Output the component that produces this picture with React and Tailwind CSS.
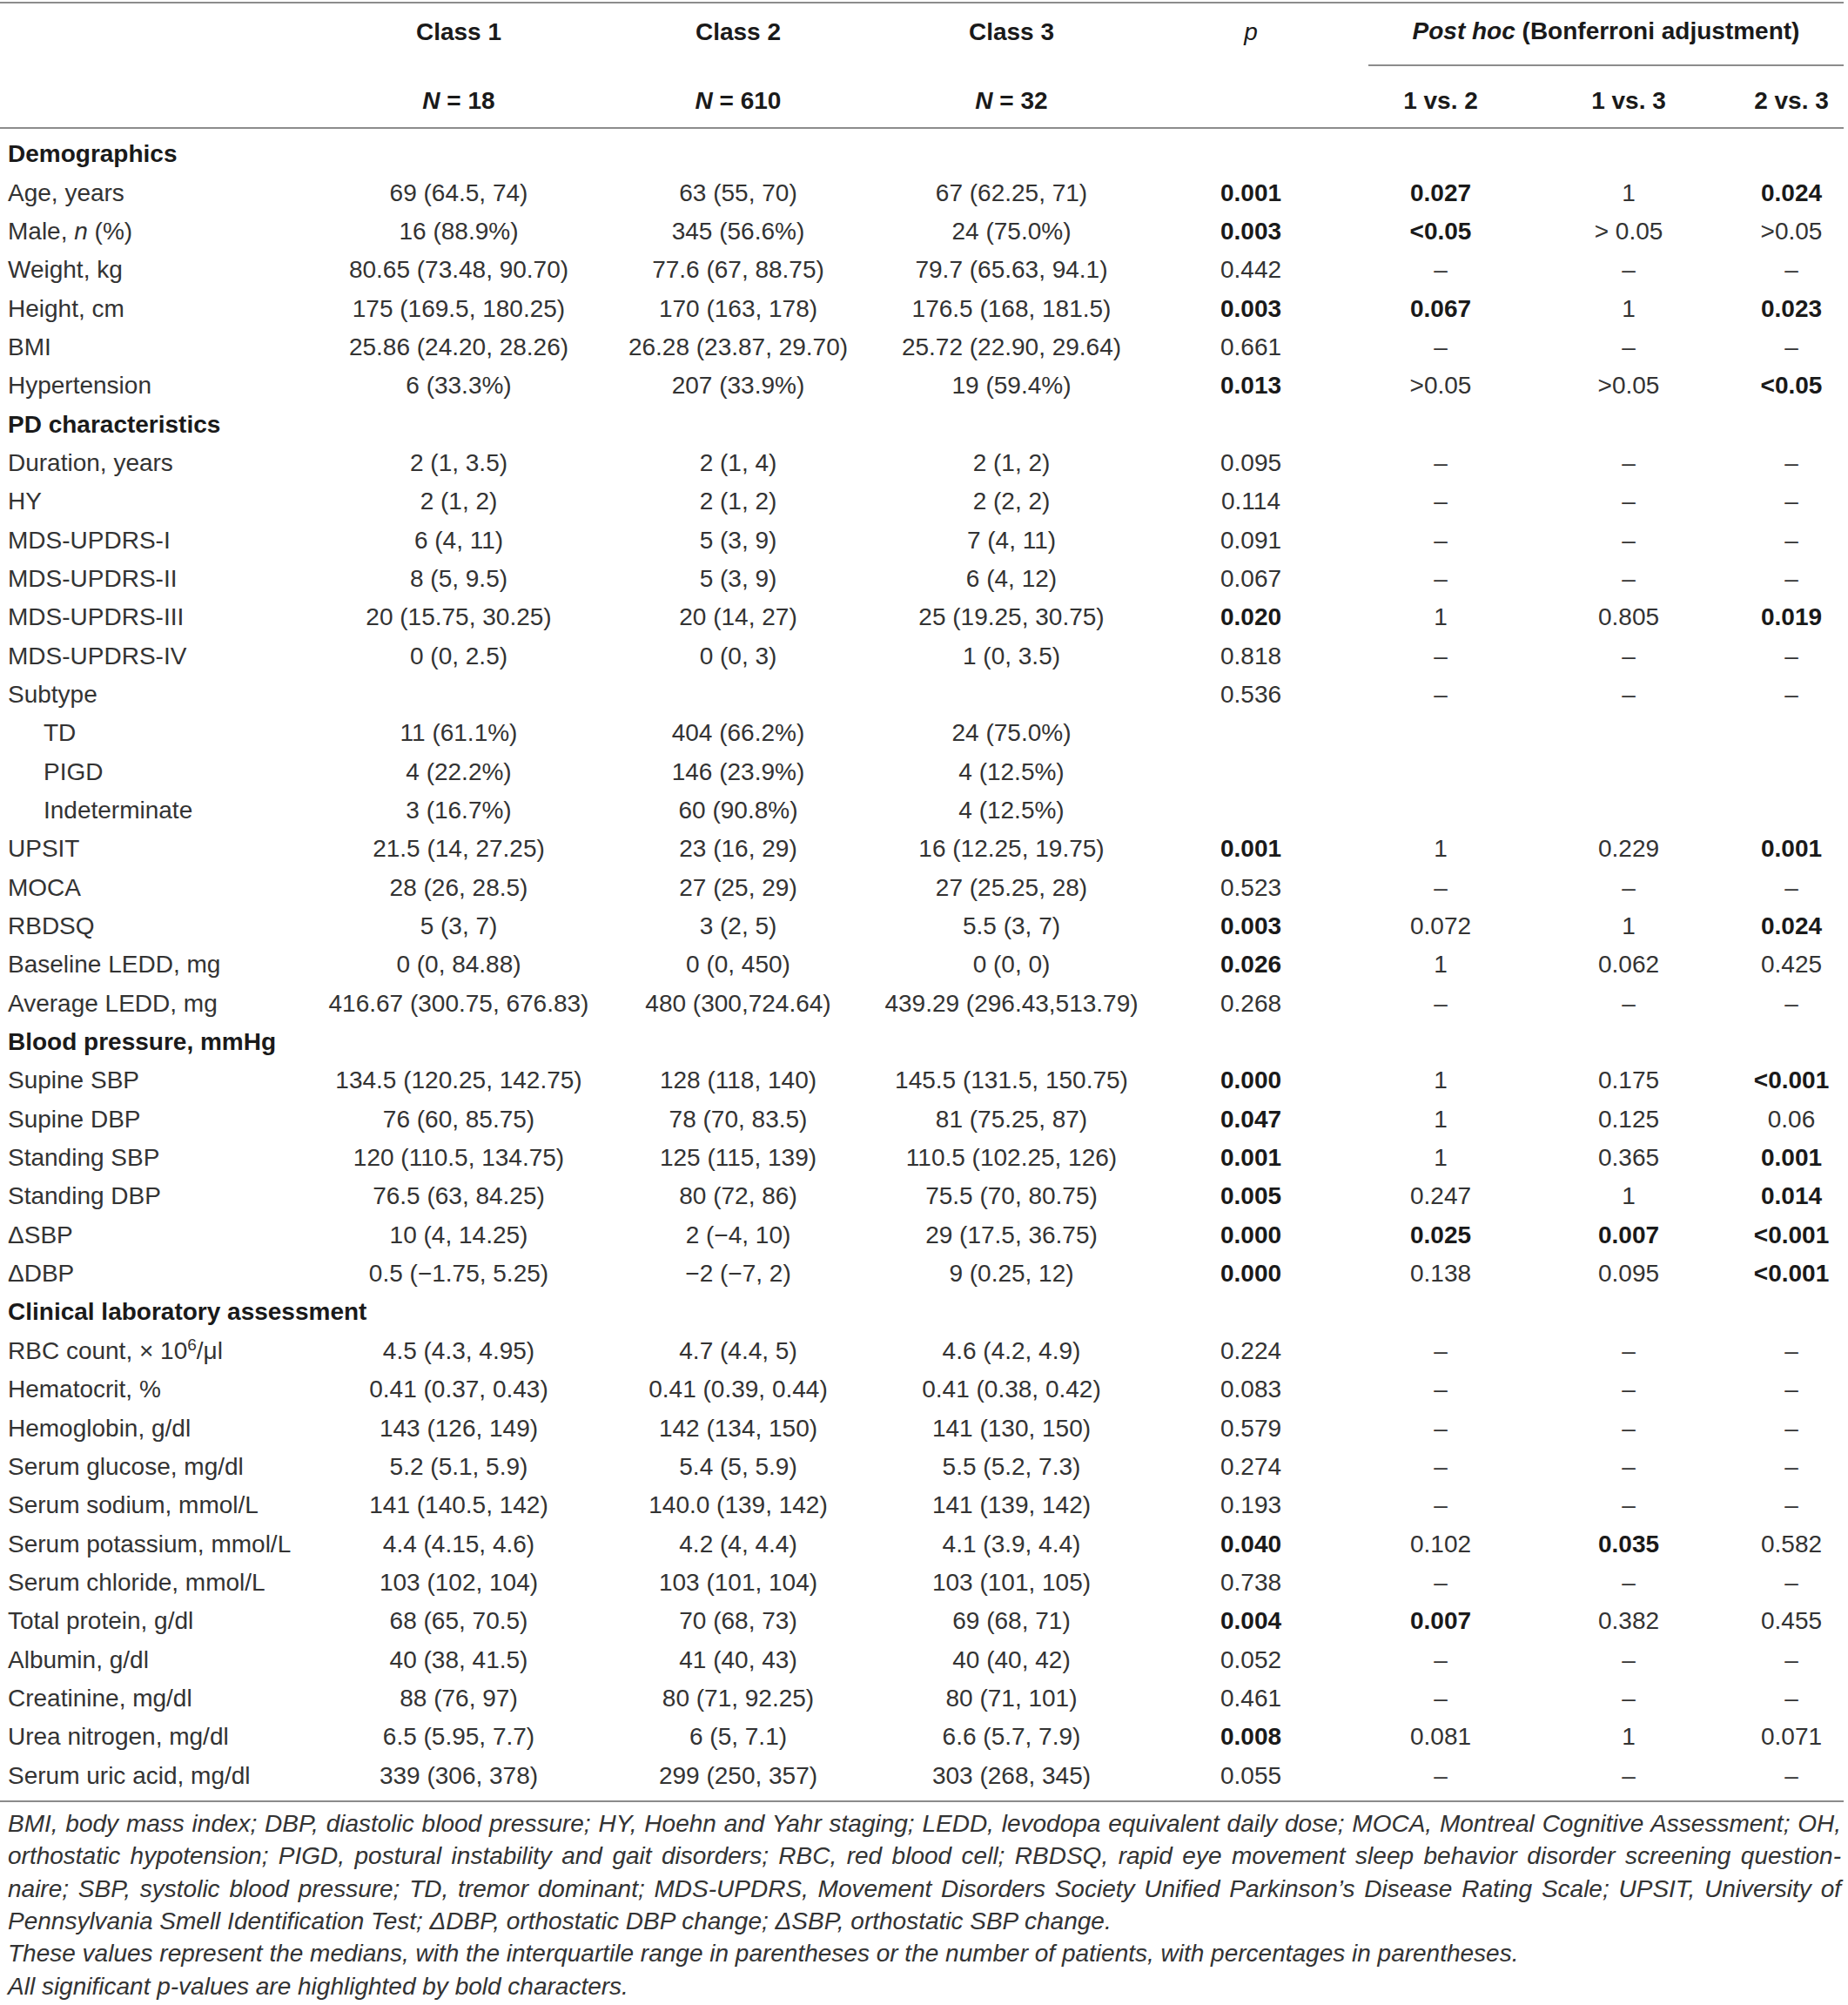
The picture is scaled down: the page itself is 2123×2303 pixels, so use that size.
import React from "react";

const COLS = "grid grid-cols-[360px_334px_308px_320px_230px_206px_226px_134px]";

// "*" at the start of a value means bold (significant)
const rows = [
  { section: "Demographics" },
  ["Age, years", "69 (64.5, 74)", "63 (55, 70)", "67 (62.25, 71)", "*0.001", "*0.027", "1", "*0.024"],
  [<>Male, <i>n</i> (%)</>, "16 (88.9%)", "345 (56.6%)", "24 (75.0%)", "*0.003", "*<0.05", "> 0.05", ">0.05"],
  ["Weight, kg", "80.65 (73.48, 90.70)", "77.6 (67, 88.75)", "79.7 (65.63, 94.1)", "0.442", "–", "–", "–"],
  ["Height, cm", "175 (169.5, 180.25)", "170 (163, 178)", "176.5 (168, 181.5)", "*0.003", "*0.067", "1", "*0.023"],
  ["BMI", "25.86 (24.20, 28.26)", "26.28 (23.87, 29.70)", "25.72 (22.90, 29.64)", "0.661", "–", "–", "–"],
  ["Hypertension", "6 (33.3%)", "207 (33.9%)", "19 (59.4%)", "*0.013", ">0.05", ">0.05", "*<0.05"],
  { section: "PD characteristics" },
  ["Duration, years", "2 (1, 3.5)", "2 (1, 4)", "2 (1, 2)", "0.095", "–", "–", "–"],
  ["HY", "2 (1, 2)", "2 (1, 2)", "2 (2, 2)", "0.114", "–", "–", "–"],
  ["MDS-UPDRS-I", "6 (4, 11)", "5 (3, 9)", "7 (4, 11)", "0.091", "–", "–", "–"],
  ["MDS-UPDRS-II", "8 (5, 9.5)", "5 (3, 9)", "6 (4, 12)", "0.067", "–", "–", "–"],
  ["MDS-UPDRS-III", "20 (15.75, 30.25)", "20 (14, 27)", "25 (19.25, 30.75)", "*0.020", "1", "0.805", "*0.019"],
  ["MDS-UPDRS-IV", "0 (0, 2.5)", "0 (0, 3)", "1 (0, 3.5)", "0.818", "–", "–", "–"],
  ["Subtype", "", "", "", "0.536", "–", "–", "–"],
  { sub: true, cells: ["TD", "11 (61.1%)", "404 (66.2%)", "24 (75.0%)", "", "", "", ""] },
  { sub: true, cells: ["PIGD", "4 (22.2%)", "146 (23.9%)", "4 (12.5%)", "", "", "", ""] },
  { sub: true, cells: ["Indeterminate", "3 (16.7%)", "60 (90.8%)", "4 (12.5%)", "", "", "", ""] },
  ["UPSIT", "21.5 (14, 27.25)", "23 (16, 29)", "16 (12.25, 19.75)", "*0.001", "1", "0.229", "*0.001"],
  ["MOCA", "28 (26, 28.5)", "27 (25, 29)", "27 (25.25, 28)", "0.523", "–", "–", "–"],
  ["RBDSQ", "5 (3, 7)", "3 (2, 5)", "5.5 (3, 7)", "*0.003", "0.072", "1", "*0.024"],
  ["Baseline LEDD, mg", "0 (0, 84.88)", "0 (0, 450)", "0 (0, 0)", "*0.026", "1", "0.062", "0.425"],
  ["Average LEDD, mg", "416.67 (300.75, 676.83)", "480 (300,724.64)", "439.29 (296.43,513.79)", "0.268", "–", "–", "–"],
  { section: "Blood pressure, mmHg" },
  ["Supine SBP", "134.5 (120.25, 142.75)", "128 (118, 140)", "145.5 (131.5, 150.75)", "*0.000", "1", "0.175", "*<0.001"],
  ["Supine DBP", "76 (60, 85.75)", "78 (70, 83.5)", "81 (75.25, 87)", "*0.047", "1", "0.125", "0.06"],
  ["Standing SBP", "120 (110.5, 134.75)", "125 (115, 139)", "110.5 (102.25, 126)", "*0.001", "1", "0.365", "*0.001"],
  ["Standing DBP", "76.5 (63, 84.25)", "80 (72, 86)", "75.5 (70, 80.75)", "*0.005", "0.247", "1", "*0.014"],
  ["ΔSBP", "10 (4, 14.25)", "2 (−4, 10)", "29 (17.5, 36.75)", "*0.000", "*0.025", "*0.007", "*<0.001"],
  ["ΔDBP", "0.5 (−1.75, 5.25)", "−2 (−7, 2)", "9 (0.25, 12)", "*0.000", "0.138", "0.095", "*<0.001"],
  { section: "Clinical laboratory assessment" },
  [<>RBC count, × 10<sup className="text-[19px]">6</sup>/μl</>, "4.5 (4.3, 4.95)", "4.7 (4.4, 5)", "4.6 (4.2, 4.9)", "0.224", "–", "–", "–"],
  ["Hematocrit, %", "0.41 (0.37, 0.43)", "0.41 (0.39, 0.44)", "0.41 (0.38, 0.42)", "0.083", "–", "–", "–"],
  ["Hemoglobin, g/dl", "143 (126, 149)", "142 (134, 150)", "141 (130, 150)", "0.579", "–", "–", "–"],
  ["Serum glucose, mg/dl", "5.2 (5.1, 5.9)", "5.4 (5, 5.9)", "5.5 (5.2, 7.3)", "0.274", "–", "–", "–"],
  ["Serum sodium, mmol/L", "141 (140.5, 142)", "140.0 (139, 142)", "141 (139, 142)", "0.193", "–", "–", "–"],
  ["Serum potassium, mmol/L", "4.4 (4.15, 4.6)", "4.2 (4, 4.4)", "4.1 (3.9, 4.4)", "*0.040", "0.102", "*0.035", "0.582"],
  ["Serum chloride, mmol/L", "103 (102, 104)", "103 (101, 104)", "103 (101, 105)", "0.738", "–", "–", "–"],
  ["Total protein, g/dl", "68 (65, 70.5)", "70 (68, 73)", "69 (68, 71)", "*0.004", "*0.007", "0.382", "0.455"],
  ["Albumin, g/dl", "40 (38, 41.5)", "41 (40, 43)", "40 (40, 42)", "0.052", "–", "–", "–"],
  ["Creatinine, mg/dl", "88 (76, 97)", "80 (71, 92.25)", "80 (71, 101)", "0.461", "–", "–", "–"],
  ["Urea nitrogen, mg/dl", "6.5 (5.95, 7.7)", "6 (5, 7.1)", "6.6 (5.7, 7.9)", "*0.008", "0.081", "1", "0.071"],
  ["Serum uric acid, mg/dl", "339 (306, 378)", "299 (250, 357)", "303 (268, 345)", "0.055", "–", "–", "–"],
];

const Value = ({ v }) => {
  if (typeof v === "string" && v.startsWith("*")) {
    return <span className="font-bold text-[#1a1a1a]">{v.slice(1)}</span>;
  }
  return <span>{v}</span>;
};

const Row = ({ cells, sub }) => (
  <div className={`${COLS} h-[44.35px] items-center`}>
    <div className={sub ? "pl-[50px]" : "pl-[9px]"}>{cells[0]}</div>
    {cells.slice(1).map((c, i) => (
      <div key={i} className={i === 6 ? "text-center pl-[14px]" : "text-center"}>
        <Value v={c} />
      </div>
    ))}
  </div>
);

export default function App() {
  return (
    <div className="bg-white min-h-screen pt-[2px]">
      <div className="w-[2118px] font-['Liberation_Sans',Arial,sans-serif] text-[28px] text-[#333]">
        {/* header */}
        <div className="border-t-2 border-[#8c8c8c]">
          <div className={`${COLS} h-[72px] font-bold text-[#1a1a1a]`}>
            <div />
            <div className="flex items-center justify-center pb-[6px]">Class 1</div>
            <div className="flex items-center justify-center pb-[6px]">Class 2</div>
            <div className="flex items-center justify-center pb-[6px]">Class 3</div>
            <div className="flex items-center justify-center pb-[6px] italic font-normal">p</div>
            <div className="col-span-3 ml-[20px] border-b-2 border-[#8c8c8c] flex items-center justify-center pb-[6px]">
              <span>
                <i>Post hoc</i> (Bonferroni adjustment)
              </span>
            </div>
          </div>
          <div className={`${COLS} h-[72px] items-center pt-[10px] font-bold text-[#1a1a1a] border-b-2 border-[#8c8c8c]`}>
            <div />
            <div className="text-center"><i>N</i> = 18</div>
            <div className="text-center"><i>N</i> = 610</div>
            <div className="text-center"><i>N</i> = 32</div>
            <div />
            <div className="text-center">1 vs. 2</div>
            <div className="text-center">1 vs. 3</div>
            <div className="text-center pl-[14px]">2 vs. 3</div>
          </div>
        </div>

        {/* body */}
        <div className="pt-[7px] pb-[6px] border-b-2 border-[#8c8c8c]">
          {rows.map((r, i) => {
            if (r.section) {
              return (
                <div key={i} className="h-[44.35px] flex items-center pl-[9px] font-bold text-[#1a1a1a]">
                  {r.section}
                </div>
              );
            }
            if (r.sub) return <Row key={i} cells={r.cells} sub />;
            return <Row key={i} cells={r} />;
          })}
        </div>

        {/* footnotes */}
        <div className="pt-[6px] pl-[9px] pr-[3px] italic text-[28px] leading-[37.4px] text-[#333]">
          <div className="text-justify [text-align-last:justify]">
            BMI, body mass index; DBP, diastolic blood pressure; HY, Hoehn and Yahr staging; LEDD, levodopa equivalent daily dose; MOCA, Montreal Cognitive Assessment; OH,
          </div>
          <div className="text-justify [text-align-last:justify]">
            orthostatic hypotension; PIGD, postural instability and gait disorders; RBC, red blood cell; RBDSQ, rapid eye movement sleep behavior disorder screening question-
          </div>
          <div className="text-justify [text-align-last:justify]">
            naire; SBP, systolic blood pressure; TD, tremor dominant; MDS-UPDRS, Movement Disorders Society Unified Parkinson’s Disease Rating Scale; UPSIT, University of
          </div>
          <div>Pennsylvania Smell Identification Test; ΔDBP, orthostatic DBP change; ΔSBP, orthostatic SBP change.</div>
          <div>These values represent the medians, with the interquartile range in parentheses or the number of patients, with percentages in parentheses.</div>
          <div>All significant p-values are highlighted by bold characters.</div>
        </div>
      </div>
    </div>
  );
}
